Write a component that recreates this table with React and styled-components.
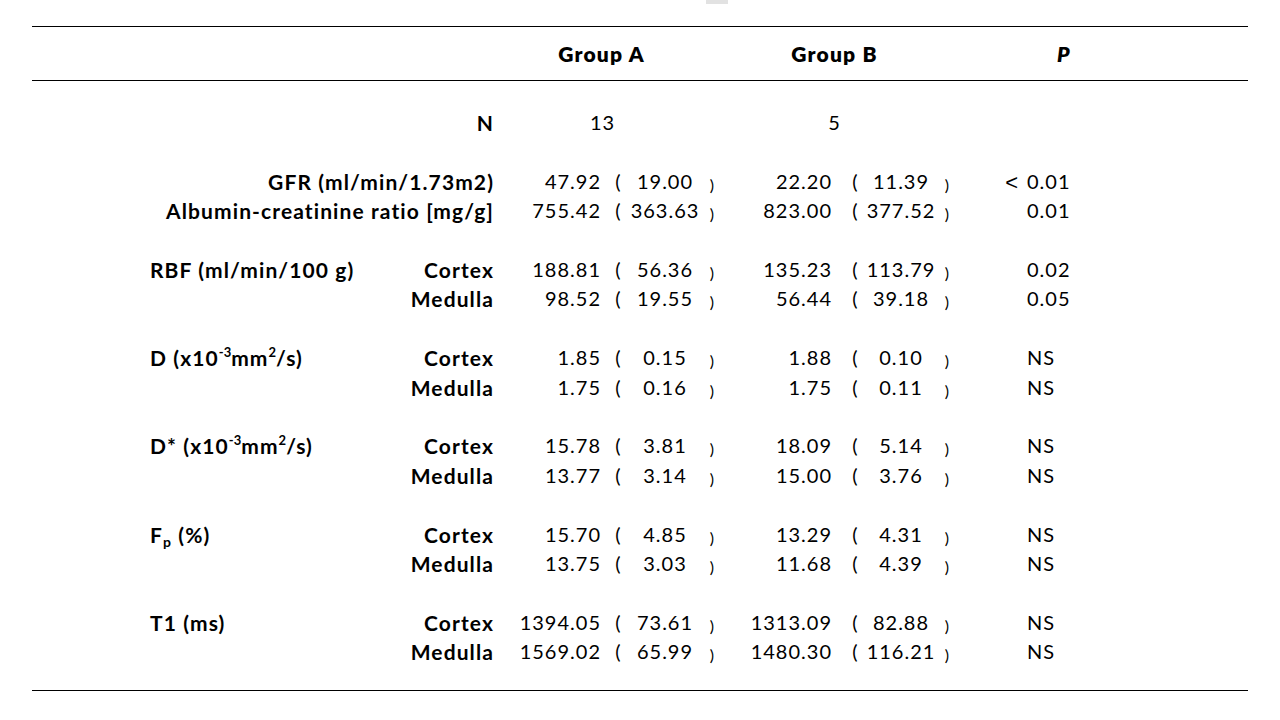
import styled, {createGlobalStyle} from 'styled-components'

const GlobalStyle = createGlobalStyle`
  body{
    margin: 0;
    background: #fff;
    color: #000;
    font-family: Lato, "Open Sans", sans-serif;
  }
`

const COLS = '358px 103px 115px 20px 74px 20px 123px 20px 72px 20px 1fr'

const Page = styled.div`
  width: 1280px;
  height: 720px;
  overflow: hidden;
`
const TopTab = styled.div`
  width: 22px;
  height: 4px;
  margin-left: 706px;
  background: #e2e2e2;
`
const Table = styled.div`
  margin: 22px 32px 0;
  border-top: 1.5px solid #000;
  border-bottom: 1.5px solid #000;
`
const HeadRow = styled.div`
  display: grid;
  grid-template-columns: ${COLS};
  height: 53px;
  align-items: center;
  border-bottom: 1.5px solid #000;
  font-size: 21px;
  font-weight: 800;
`
const HeadCell = styled.div`
  grid-column: ${p => p.$col};
  text-align: ${p => p.$align || 'center'};
  padding-right: ${p => p.$pr || 0}px;
  padding-left: ${p => p.$pl || 0}px;
  font-style: ${p => p.$italic ? 'italic' : 'normal'};
  letter-spacing: ${p => p.$italic ? 0 : 1.2}px;
`
const Body = styled.div`
  padding: 27px 0 24px;
`
const Group = styled.div`
  & + &{
    margin-top: 29.6px;
  }
`
const Row = styled.div`
  display: grid;
  grid-template-columns: ${COLS};
  height: 29.3px;
  align-items: center;
  font-size: 20px;
  line-height: 29.3px;
  white-space: nowrap;
`
const Label = styled.div`
  grid-column: ${p => p.$wide ? '1 / 3' : 'auto'};
  text-align: ${p => p.$wide ? 'right' : 'left'};
  padding-left: ${p => p.$wide ? 0 : 118}px;
  margin-right: -1px;
  font-size: 21px;
  font-weight: 700;
  letter-spacing: 1.1px;
`
const SubLabel = styled.div`
  text-align: right;
  margin-right: -1px;
  font-size: 21px;
  font-weight: 700;
  letter-spacing: 1.1px;
`
const Mean = styled.div`
  text-align: right;
  padding-right: ${p => p.$pr}px;
  letter-spacing: 1px;
`
const Paren = styled.div`
  text-align: center;
`
const CloseParen = styled.div`
  text-align: center;
  font-size: 16px;
  position: relative;
  top: 3px;
`
const Sd = styled.div`
  text-align: center;
  letter-spacing: 1px;
`
const Count = styled.div`
  grid-column: ${p => p.$col};
  text-align: center;
  padding-right: 10px;
  letter-spacing: 1px;
`
const PCell = styled.div`
  display: flex;
`
const PPrefix = styled.span`
  width: 61px;
  padding-right: 9px;
  text-align: right;
  font-family: "Liberation Sans", sans-serif;
  font-size: 22px;
  position: relative;
  top: 1px;
`
const PValue = styled.span`
  letter-spacing: 1px;
`
const Sup = styled.sup`
  font-size: 13px;
  vertical-align: 9px;
  line-height: 0;
  letter-spacing: 0;
`
const Sub = styled.sub`
  font-size: 14px;
  vertical-align: -4px;
  line-height: 0;
`

const unit = <> (x10<Sup>-3</Sup>mm<Sup>2</Sup>/s)</>

const groups = [
  [
    {label: 'GFR (ml/min/1.73m2)', wide: true, a: ['47.92', '19.00'], b: ['22.20', '11.39'], p: ['<', '0.01']},
    {label: 'Albumin-creatinine ratio [mg/g]', wide: true, a: ['755.42', '363.63'], b: ['823.00', '377.52'], p: ['', '0.01']},
  ],
  [
    {label: 'RBF (ml/min/100 g)', sub: 'Cortex', a: ['188.81', '56.36'], b: ['135.23', '113.79'], p: ['', '0.02']},
    {sub: 'Medulla', a: ['98.52', '19.55'], b: ['56.44', '39.18'], p: ['', '0.05']},
  ],
  [
    {label: <>D{unit}</>, sub: 'Cortex', a: ['1.85', '0.15'], b: ['1.88', '0.10'], p: ['', 'NS']},
    {sub: 'Medulla', a: ['1.75', '0.16'], b: ['1.75', '0.11'], p: ['', 'NS']},
  ],
  [
    {label: <>D*{unit}</>, sub: 'Cortex', a: ['15.78', '3.81'], b: ['18.09', '5.14'], p: ['', 'NS']},
    {sub: 'Medulla', a: ['13.77', '3.14'], b: ['15.00', '3.76'], p: ['', 'NS']},
  ],
  [
    {label: <>F<Sub>p</Sub> (%)</>, sub: 'Cortex', a: ['15.70', '4.85'], b: ['13.29', '4.31'], p: ['', 'NS']},
    {sub: 'Medulla', a: ['13.75', '3.03'], b: ['11.68', '4.39'], p: ['', 'NS']},
  ],
  [
    {label: 'T1 (ms)', sub: 'Cortex', a: ['1394.05', '73.61'], b: ['1313.09', '82.88'], p: ['', 'NS']},
    {sub: 'Medulla', a: ['1569.02', '65.99'], b: ['1480.30', '116.21'], p: ['', 'NS']},
  ],
]

const DataRow = ({row}) => (
  <Row>
    {row.wide
      ? <Label $wide>{row.label}</Label>
      : <>
          <Label>{row.label}</Label>
          <SubLabel>{row.sub}</SubLabel>
        </>}
    <Mean $pr={7}>{row.a[0]}</Mean>
    <Paren>(</Paren>
    <Sd>{row.a[1]}</Sd>
    <CloseParen>)</CloseParen>
    <Mean $pr={13}>{row.b[0]}</Mean>
    <Paren>(</Paren>
    <Sd>{row.b[1]}</Sd>
    <CloseParen>)</CloseParen>
    <PCell>
      <PPrefix>{row.p[0]}</PPrefix>
      <PValue>{row.p[1]}</PValue>
    </PCell>
  </Row>
)

export default function App() {
  return (
    <Page>
      <GlobalStyle />
      <TopTab />
      <Table>
        <HeadRow>
          <HeadCell $col="3 / 7" $pr={12}>Group A</HeadCell>
          <HeadCell $col="7 / 11" $pr={10}>Group B</HeadCell>
          <HeadCell $col="11" $align="left" $pl={100} $italic>P</HeadCell>
        </HeadRow>
        <Body>
          <Group>
            <Row>
              <Label $wide>N</Label>
              <Count $col="3 / 7">13</Count>
              <Count $col="7 / 11">5</Count>
            </Row>
          </Group>
          {groups.map((g, i) => (
            <Group key={i}>
              {g.map((row, j) => <DataRow key={j} row={row} />)}
            </Group>
          ))}
        </Body>
      </Table>
    </Page>
  )
}
